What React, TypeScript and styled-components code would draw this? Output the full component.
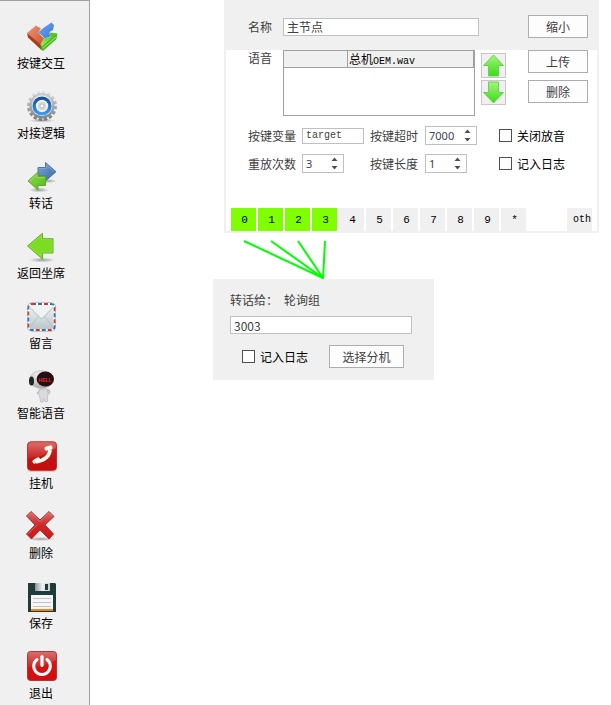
import React, { useState } from "react";
import styled, { createGlobalStyle } from "styled-components";

const cjk = `"Noto Sans CJK SC", sans-serif`;
const mono = `"Liberation Mono", "Noto Sans CJK SC", monospace`;

const GlobalStyle = createGlobalStyle`
  *, *::before, *::after { box-sizing: border-box; }
  body {
    margin: 0;
    background: #ffffff;
    color: #000000;
    font: 12px/16px ${cjk};
  }
  button, input { font: inherit; color: inherit; margin: 0; padding: 0; border-radius: 0; }
`;

const Shell = styled.div`
  display: flex;
  min-height: 100vh;
`;

const Sidebar = styled.nav`
  flex: none;
  display: flex;
  flex-direction: column;
  align-items: center;
  gap: 19px;
  width: 90px;
  padding: 19px 7px 0 0;
  background: #f0f0f0;
  border-top: 1px solid #a0a0a0;
  border-right: 1px solid #a0a0a0;
`;

const Tool = styled.button`
  display: flex;
  flex-direction: column;
  align-items: center;
  gap: 3px;
  border: 0;
  background: none;
  white-space: nowrap;
  svg { display: block; width: 32px; height: 32px; overflow: visible; }
`;

const Canvas = styled.main`
  position: relative;
  flex: 1;
  min-width: 0;
`;

const Node = styled.section<{ $x: number; $y: number; $w: number }>`
  position: absolute;
  left: ${(p) => p.$x}px;
  top: ${(p) => p.$y}px;
  width: ${(p) => p.$w}px;
  background: #f0f0f0;
`;

const Wires = styled.svg`
  position: absolute;
  left: 150px;
  top: 240px;
  width: 90px;
  height: 40px;
`;

const GradientDefs = styled.svg`
  position: absolute;
  width: 0;
  height: 0;
`;

const NodeHeader = styled.header`
  display: flex;
  align-items: center;
  height: 50px;
  padding: 3px 11px 0 24px;
`;

const NodeBody = styled.div`
  border: 2px solid #f0f0f0;
  border-top: 0;
  background: #ffffff;
`;

const VoiceRow = styled.div`
  display: flex;
  align-items: flex-start;
  padding: 0 9px 0 22px;
`;

const Caption = styled.label<{ $w?: number }>`
  flex: none;
  width: ${(p) => (p.$w ? `${p.$w}px` : "auto")};
  color: #404040;
  white-space: nowrap;
`;

const TextBox = styled.input<{ $w: number; $mono?: boolean }>`
  width: ${(p) => p.$w}px;
  height: ${(p) => (p.$mono ? 16 : 18)}px;
  padding: 0 3px;
  border: 1px solid #c0c0c0;
  background: #ffffff;
  color: #404040;
  font-family: ${(p) => (p.$mono ? mono : cjk)};
  font-size: ${(p) => (p.$mono ? 10 : 12)}px;
`;

const PushButton = styled.button<{ $w: number }>`
  flex: none;
  width: ${(p) => p.$w}px;
  height: 23px;
  border: 1px solid #adadad;
  background: #fdfdfd;
  color: #404040;
`;

const Stack = styled.div<{ $gap: number; $top?: number }>`
  display: flex;
  flex-direction: column;
  gap: ${(p) => p.$gap}px;
  padding-top: ${(p) => p.$top ?? 0}px;
`;

const MoveButton = styled.button`
  width: 25px;
  height: 25px;
  border: 1px solid #c8c8c8;
  background: #f0f0f0;
  svg { display: block; width: 23px; height: 23px; }
`;

const Pusher = styled.div`
  margin-left: auto;
`;

const VoiceBox = styled.div`
  width: 192px;
  height: 66px;
  margin-right: 6px;
  border: 1px solid #a0a0a0;
  background: #ffffff;
`;

const VoiceTable = styled.table`
  width: 100%;
  border-collapse: separate;
  border-spacing: 0;
  table-layout: fixed;
  th {
    height: 17px;
    padding: 0 0 0 1px;
    border-bottom: 1px solid #a0a0a0;
    border-right: 1px solid #a0a0a0;
    background: #f0f0f0;
    font-weight: 400;
    line-height: 16px;
    text-align: left;
    white-space: nowrap;
  }
  th:first-child { width: 64px; }
`;

const Latin = styled.span`
  font-family: ${mono};
  font-size: 10px;
  line-height: 10px;
`;

const Settings = styled.div`
  display: grid;
  grid-template-columns: 54px 68px 55px 74px auto;
  grid-auto-rows: 19px;
  row-gap: 9px;
  align-items: center;
  padding: 10px 0 35px 22px;
`;

const Spinner = styled.span<{ $w: number }>`
  display: flex;
  align-items: center;
  width: ${(p) => p.$w}px;
  height: 19px;
  border: 1px solid #c0c0c0;
  background: #ffffff;
  padding: 0 4px 0 3px;
  input {
    flex: 1;
    min-width: 0;
    width: 0;
    height: 17px;
    border: 0;
    background: none;
    color: #404058;
    font: 11px/17px "Noto Sans", sans-serif;
    appearance: textfield;
    outline: 0;
  }
  input::-webkit-inner-spin-button { appearance: none; margin: 0; }
`;

const Arrows = styled.span`
  display: flex;
  flex-direction: column;
  gap: 1px;
  button { display: block; height: 7px; width: 9px; border: 0; background: none; }
  svg { display: block; width: 9px; height: 7px; fill: #505050; }
`;

const Check = styled.label`
  display: flex;
  align-items: center;
  gap: 5px;
  white-space: nowrap;
  input {
    appearance: none;
    width: 13px;
    height: 13px;
    border: 1px solid #505050;
    background: #ffffff;
  }
  input:checked { box-shadow: inset 0 0 0 2px #ffffff; background: #404040; }
`;

const Keys = styled.div`
  display: flex;
  gap: 2px;
  padding: 0 5px;
`;

const Key = styled.button<{ $active?: boolean; $last?: boolean }>`
  width: 25px;
  height: 23px;
  margin-left: ${(p) => (p.$last ? "auto" : "0")};
  padding-left: ${(p) => (p.$last ? 6 : 2)}px;
  border: 0;
  overflow: hidden;
  background: ${(p) => (p.$active ? "#80ff00" : "#f0f0f0")};
  font-family: ${mono};
  font-size: ${(p) => (p.$last ? 10 : 11)}px;
  text-align: ${(p) => (p.$last ? "left" : "center")};
`;

const Transfer = styled.div`
  display: flex;
  flex-direction: column;
  padding: 13px 22px 12px 17px;
`;

const Target = styled.div`
  display: flex;
  gap: 6px;
  margin-bottom: 8px;
  color: #404040;
`;

const Actions = styled.div`
  display: flex;
  align-items: center;
  justify-content: space-between;
  padding: 11px 8px 0 12px;
`;

const Gradients = () => (
  <GradientDefs aria-hidden="true">
    <defs>
      <linearGradient id="blue" x1="0" y1="0" x2="1" y2="1">
        <stop offset="0" stopColor="#73a8f0" /><stop offset="1" stopColor="#3a78d6" />
      </linearGradient>
      <linearGradient id="steel" x1="0" y1="0" x2="1" y2="1">
        <stop offset="0" stopColor="#7fa8d6" /><stop offset="1" stopColor="#3465a4" />
      </linearGradient>
      <linearGradient id="orange" x1="0" y1="0" x2="1" y2="1">
        <stop offset="0" stopColor="#e8997c" /><stop offset="1" stopColor="#d25328" />
      </linearGradient>
      <linearGradient id="leaf" x1="1" y1="0" x2="0" y2="1">
        <stop offset="0" stopColor="#3fbf1c" /><stop offset="1" stopColor="#a4e868" />
      </linearGradient>
      <linearGradient id="green" x1="0" y1="0" x2="1" y2="1">
        <stop offset="0" stopColor="#8fdc50" /><stop offset="1" stopColor="#55b818" />
      </linearGradient>
      <linearGradient id="lime" x1="0" y1="0" x2="0" y2="1">
        <stop offset="0" stopColor="#a4f47c" /><stop offset="1" stopColor="#38dd16" />
      </linearGradient>
      <linearGradient id="silver" x1="0" y1="0" x2="0" y2="1">
        <stop offset="0" stopColor="#dedede" /><stop offset="1" stopColor="#777b80" />
      </linearGradient>
      <linearGradient id="ring" x1="0" y1="0" x2="0" y2="1">
        <stop offset="0" stopColor="#124f9d" /><stop offset="1" stopColor="#3b9af0" />
      </linearGradient>
      <linearGradient id="paper" x1="0" y1="0" x2="0" y2="1">
        <stop offset="0" stopColor="#eef3f3" /><stop offset="1" stopColor="#b9c8cb" />
      </linearGradient>
      <linearGradient id="red" x1="0" y1="0" x2="0" y2="1">
        <stop offset="0" stopColor="#d9706c" /><stop offset="0.5" stopColor="#ca2a2a" /><stop offset="1" stopColor="#d51212" />
      </linearGradient>
      <linearGradient id="metal" x1="0" y1="0" x2="1" y2="0">
        <stop offset="0" stopColor="#8d9494" /><stop offset="0.5" stopColor="#f0f2f2" /><stop offset="1" stopColor="#c7cccc" />
      </linearGradient>
      <radialGradient id="shade">
        <stop offset="0" stopColor="#000" stopOpacity="0.35" /><stop offset="1" stopColor="#000" stopOpacity="0" />
      </radialGradient>
      <radialGradient id="helmet" cx="0.4" cy="0.25" r="0.8">
        <stop offset="0" stopColor="#f4f4f6" /><stop offset="1" stopColor="#a5a5a8" />
      </radialGradient>
    </defs>
  </GradientDefs>
);

const BlocksIcon = () => (
  <svg viewBox="0 0 32 32">
    <path d="M2 13 3 17.500 17 30.500 16.500 23Z" fill="#a63e1c" />
    <path d="M2 13 11 5.500 16 8.500 13 12.500 19 18.500 15.500 24.500Z" fill="url(#orange)" />
    <path d="M15.500 24.500 32.300 13.500 31.500 19 18 31 16 29Z" fill="#42b81c" />
    <path d="M19 18.500 25 17 25 12.500 32.300 13.500 17 26.500 15.500 24.500Z" fill="url(#leaf)" />
    <path d="M13 12.500 19 7.500 26.500 2.500 29 5 28 10 24.500 12 25 16.500 19.500 18.500 17 15.500Z" fill="url(#blue)" />
    <path d="M17.500 28.500 31 17" stroke="#8ae04e" strokeWidth="1.200" />
  </svg>
);

const GearIcon = () => (
  <svg viewBox="0 0 32 32">
    <ellipse cx="17" cy="30.500" rx="13" ry="2" fill="url(#shade)" />
    <circle cx="17" cy="16" r="13" fill="none" stroke="url(#silver)" strokeWidth="4" strokeDasharray="3.200 1.884" />
    <circle cx="17" cy="16" r="12.300" fill="url(#silver)" stroke="#9ea2a5" strokeWidth=".6" />
    <circle cx="17" cy="16" r="10.200" fill="#f4f8fc" />
    <circle cx="17" cy="16" r="7.900" fill="#dfe8f0" stroke="url(#ring)" strokeWidth="3.400" />
    <circle cx="17" cy="16" r="5" fill="#d3d8dc" stroke="#fff" strokeWidth="1" />
    <circle cx="17" cy="16" r="2" fill="#fff" stroke="#a9b0b6" strokeWidth=".8" />
  </svg>
);

const TransferIcon = () => (
  <svg viewBox="0 0 32 32">
    <ellipse cx="14" cy="30" rx="10" ry="2.500" fill="url(#shade)" />
    <ellipse cx="23" cy="21" rx="9" ry="2" fill="url(#shade)" />
    <path d="M13 7.500H20.500V2.500L31 11.700 20.500 21V16H13Z" fill="url(#steel)" stroke="#4a78b2" />
    <path d="M14 8.500H21.500V5L29 11.700" fill="none" stroke="#8fb3dc" strokeWidth=".6" />
    <path d="M20.500 16.500V25.500H13V30L3 21 13 12V16.500Z" fill="url(#green)" stroke="#5cab2a" />
    <path d="M19.500 17.500H12V14.500L4.500 21" fill="none" stroke="#a5e478" strokeWidth=".6" />
  </svg>
);

const BackIcon = () => (
  <svg viewBox="0 0 32 32">
    <ellipse cx="17" cy="30" rx="13" ry="2.500" fill="url(#shade)" />
    <path d="M28 8.700V23H17.500V29L2.500 16 17.500 3.300V8.700Z" fill="#7ddc22" stroke="#62ad2c" />
    <path d="M27 22H16.500V26.500L4 16 16.500 5.500V9.700H27Z" fill="none" stroke="#98e650" strokeWidth=".6" />
  </svg>
);

const MailIcon = () => (
  <svg viewBox="0 0 32 32">
    <rect x="2" y="2.500" width="29" height="29" rx="5" fill="#8c999f" />
    <rect x="3.500" y="4" width="26" height="26" rx="3.500" fill="#fff" stroke="#fff" strokeWidth="2" />
    <rect x="3.500" y="4" width="26" height="26" rx="3.500" fill="none" stroke="#c33a42" strokeWidth="2" strokeDasharray="4 8" />
    <rect x="3.500" y="4" width="26" height="26" rx="3.500" fill="none" stroke="#3b6fb4" strokeWidth="2" strokeDasharray="4 8" strokeDashoffset="-6" />
    <rect x="4.500" y="5" width="24" height="24" rx="2" fill="url(#paper)" />
    <path d="M5 27 13.500 16.500M28 27 19.500 16.500" stroke="#aab9bd" strokeWidth=".7" fill="none" />
    <path d="M5 7.500 16.500 19 28 7.500Q28 5 26 5H7Q5 5 5 7.500Z" fill="#eff3f3" />
    <path d="M5 7.500 16.500 19 28 7.500" fill="none" stroke="#a3b1b5" strokeWidth=".8" />
  </svg>
);

const RobotIcon = () => (
  <svg viewBox="0 0 32 32">
    <path d="M14 21.500 12.500 23.500M22 20Q25.500 20 24 23.500" fill="none" stroke="#c0c0c4" strokeWidth="1.800" strokeLinecap="round" />
    <path d="M14.500 19H22Q24 24 22.500 27.500V31.500H20L18.500 28.500 18 32H15.500L15 28Q12.500 23 14.500 19Z" fill="#dadadd" stroke="#a8a8ac" strokeWidth=".5" />
    <ellipse cx="16.500" cy="9.500" rx="12" ry="9" fill="url(#helmet)" stroke="#a8a8ac" strokeWidth=".4" />
    <ellipse cx="6.500" cy="11" rx="2.500" ry="4.500" fill="#242426" />
    <ellipse cx="20.300" cy="9" rx="8.700" ry="7.500" fill="#241012" />
    <text x="13.600" y="12" fontFamily="Liberation Sans" fontWeight="700" fontSize="5" fill="#e02c28">HELL</text>
  </svg>
);

const HangUpIcon = () => (
  <svg viewBox="0 0 32 32">
    <rect x="2" y="2" width="30" height="30" rx="4" fill="#d6cdbd" />
    <rect x="2.500" y="1.800" width="29" height="28.500" rx="3.500" fill="url(#red)" stroke="#c0302c" />
    <path d="M3 18Q18 18 31 8V27Q31 30 28 30H6Q3 30 3 27Z" fill="#b90909" opacity=".6" />
    <g fill="none" stroke="#fff8ed">
      <path d="M25 9.500Q25 19 11 22" strokeWidth="3.600" />
      <path d="M21.500 8.500 25.500 7.500M9.500 21.500 13 19.500" strokeWidth="4.200" strokeLinecap="round" />
    </g>
  </svg>
);

const CrossIcon = () => (
  <svg viewBox="0 0 32 32">
    <ellipse cx="16" cy="29" rx="14" ry="2" fill="url(#shade)" />
    <path d="M6 1.500 15 10 24 1.500 29 6.500 20 15 28.500 24 24 29 15 20 6.500 29 1.500 24 10 15 1.500 6Z" fill="url(#red)" stroke="#b03030" strokeLinejoin="round" />
    <path d="M3 6 6 3 15 11.500 24 3 27.500 6.500M12 15 3 24" fill="none" stroke="#e08480" strokeWidth=".6" />
  </svg>
);

const DiskIcon = () => (
  <svg viewBox="0 0 32 32">
    <path d="M3 3H30L31 4V32H3Z" fill="#203b3b" />
    <rect x="10" y="3" width="15" height="8" fill="url(#metal)" />
    <rect x="20" y="4" width="3" height="6" fill="#243a3a" />
    <rect x="6" y="15" width="22" height="15" fill="#f6f6f6" />
    <path d="M8 18.500H26M8 22.500H26M8 26.500H26" stroke="#c2c2c2" />
    <rect x="6" y="29" width="22" height="2" fill="#f08418" />
  </svg>
);

const PowerIcon = () => (
  <svg viewBox="0 0 32 32">
    <rect x="2.500" y="1.500" width="29" height="29" rx="3" fill="url(#red)" stroke="#a33b39" />
    <path d="M3 17Q18 18 31 10V27Q31 30 28 30H6Q3 30 3 27Z" fill="#d90808" opacity=".7" />
    <path d="M12 9.500A8.300 8.300 0 1 0 22 9.500" fill="none" stroke="#fff" strokeWidth="3" strokeLinecap="round" />
    <path d="M17 6.500V15.500" stroke="#fff" strokeWidth="3.200" strokeLinecap="round" />
  </svg>
);

const tools: [string, React.FC][] = [
  ["按键交互", BlocksIcon],
  ["对接逻辑", GearIcon],
  ["转话", TransferIcon],
  ["返回坐席", BackIcon],
  ["留言", MailIcon],
  ["智能语音", RobotIcon],
  ["挂机", HangUpIcon],
  ["删除", CrossIcon],
  ["保存", DiskIcon],
  ["退出", PowerIcon],
];

function NumberBox({ id, initial, width }: { id: string; initial: number; width: number }) {
  const [value, setValue] = useState(initial);
  return (
    <Spinner $w={width}>
      <input id={id} type="number" value={value} onChange={(e) => setValue(Number(e.target.value))} />
      <Arrows>
        <button type="button" aria-label="+" onClick={() => setValue(value + 1)}>
          <svg viewBox="0 0 9 7"><path d="M1.500 5 4.500 1.500 7.500 5Z" /></svg>
        </button>
        <button type="button" aria-label="-" onClick={() => setValue(value - 1)}>
          <svg viewBox="0 0 9 7"><path d="M1.500 2 4.500 5.500 7.500 2Z" /></svg>
        </button>
      </Arrows>
    </Spinner>
  );
}

const keys = ["0", "1", "2", "3", "4", "5", "6", "7", "8", "9", "*"];

export default function App() {
  return (
    <Shell>
      <GlobalStyle />
      <Gradients />
      <Sidebar>
        {tools.map(([name, Icon]) => (
          <Tool key={name} type="button">
            <Icon />
            {name}
          </Tool>
        ))}
      </Sidebar>
      <Canvas>
        <Node $x={134} $y={0} $w={375}>
          <NodeHeader>
            <Caption htmlFor="name" $w={35}>名称</Caption>
            <TextBox id="name" $w={196} defaultValue="主节点" />
            <Pusher>
              <PushButton type="button" $w={60}>缩小</PushButton>
            </Pusher>
          </NodeHeader>
          <NodeBody>
            <VoiceRow>
              <Caption as="span" $w={35}>语音</Caption>
              <VoiceBox>
                <VoiceTable>
                  <thead>
                    <tr>
                      <th />
                      <th>总机<Latin>OEM.wav</Latin></th>
                    </tr>
                  </thead>
                </VoiceTable>
              </VoiceBox>
              <Stack $gap={2} $top={3}>
                <MoveButton type="button" aria-label="上移">
                  <svg viewBox="0 0 23 23">
                    <path d="M11.500 1 21.500 11.500H16.500V22H6.500V11.500H1.500Z" fill="url(#lime)" stroke="#6fcf50" />
                  </svg>
                </MoveButton>
                <MoveButton type="button" aria-label="下移">
                  <svg viewBox="0 0 23 23">
                    <path d="M6.500 1H16.500V11.500H21.500L11.500 22 1.500 11.500H6.500Z" fill="url(#lime)" stroke="#6fcf50" />
                  </svg>
                </MoveButton>
              </Stack>
              <Pusher>
                <Stack $gap={7}>
                  <PushButton type="button" $w={60}>上传</PushButton>
                  <PushButton type="button" $w={60}>删除</PushButton>
                </Stack>
              </Pusher>
            </VoiceRow>
            <Settings>
              <Caption htmlFor="variable">按键变量</Caption>
              <TextBox id="variable" $w={62} $mono defaultValue="target" />
              <Caption htmlFor="timeout">按键超时</Caption>
              <NumberBox id="timeout" initial={7000} width={52} />
              <Check><input type="checkbox" />关闭放音</Check>
              <Caption htmlFor="repeat">重放次数</Caption>
              <NumberBox id="repeat" initial={3} width={42} />
              <Caption htmlFor="length">按键长度</Caption>
              <NumberBox id="length" initial={1} width={42} />
              <Check><input type="checkbox" />记入日志</Check>
            </Settings>
            <Keys>
              {keys.map((k, i) => (
                <Key key={k} type="button" $active={i < 4}>{k}</Key>
              ))}
              <Key type="button" $last>oth</Key>
            </Keys>
          </NodeBody>
        </Node>
        <Wires viewBox="240 240 90 40" stroke="#00ff00" strokeWidth="2" fill="none">
          <path d="M244 241 323 278M271 241 323 278M298 241 323 278M325 241 323 279" />
        </Wires>
        <Node $x={123} $y={279} $w={221}>
          <Transfer>
            <Target>
              <label htmlFor="extension">转话给：</label>
              <span>轮询组</span>
            </Target>
            <TextBox id="extension" $w={182} defaultValue="3003" />
            <Actions>
              <Check><input type="checkbox" />记入日志</Check>
              <PushButton type="button" $w={75}>选择分机</PushButton>
            </Actions>
          </Transfer>
        </Node>
      </Canvas>
    </Shell>
  );
}
